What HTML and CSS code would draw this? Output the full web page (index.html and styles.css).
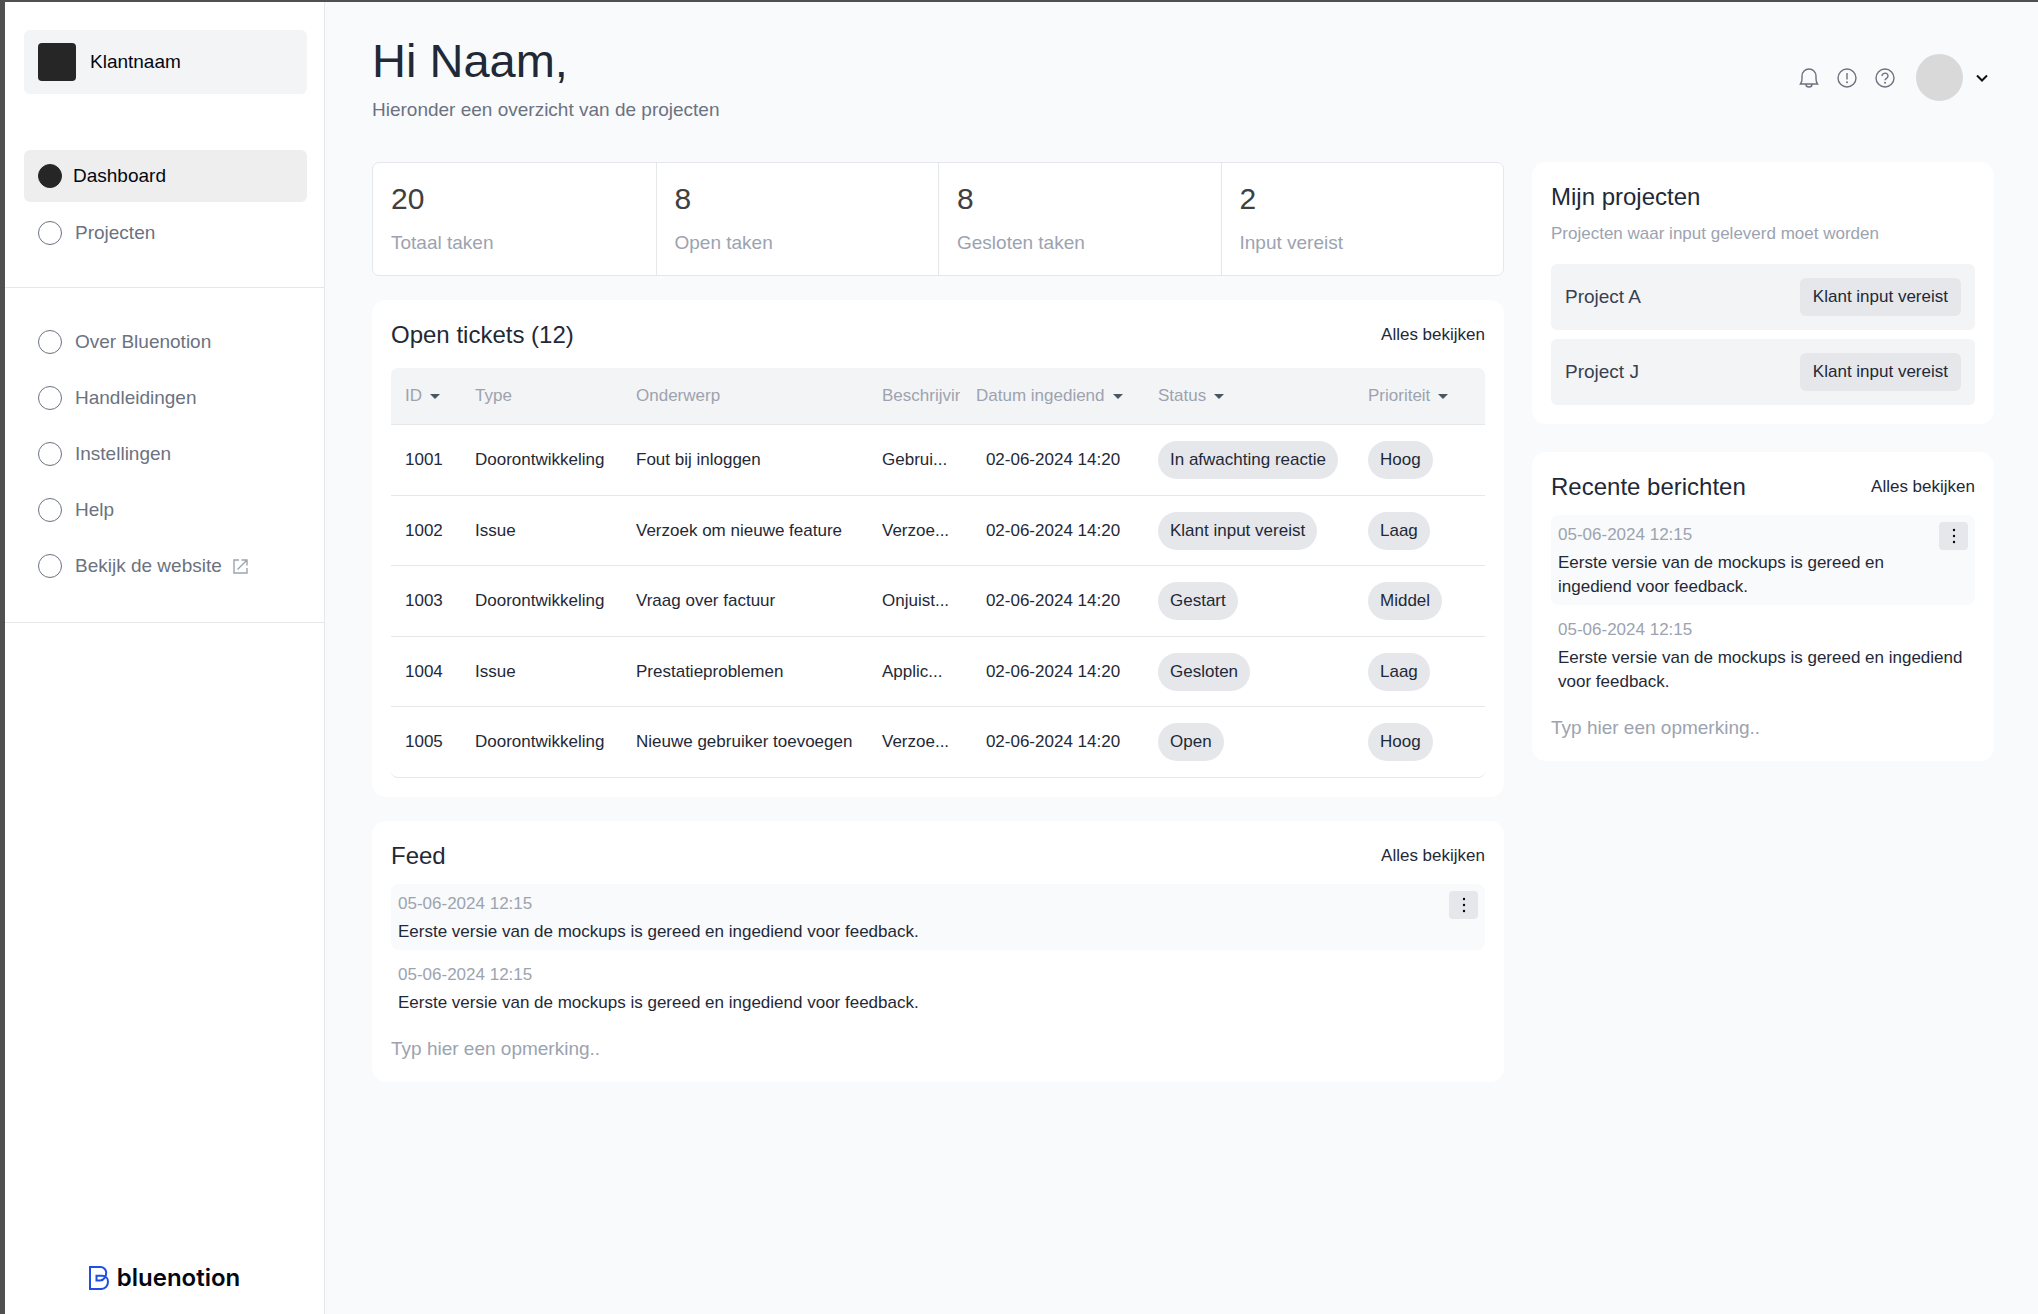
FILE: index.html
```html
<!DOCTYPE html>
<html lang="nl">
<head>
  <meta charset="utf-8">
  <meta name="viewport" content="width=device-width, initial-scale=1">
  <title>Dashboard</title>
  <link rel="stylesheet" href="styles.css">
</head>
<body>
  <div class="app">
    <aside class="sidebar">
      <a class="client" href="#"><span class="client-logo"></span>Klantnaam</a>
      <nav class="menu">
        <a class="menu-item active" href="#"><span class="dot"></span>Dashboard</a>
        <a class="menu-item" href="#"><span class="dot"></span>Projecten</a>
      </nav>
      <nav class="menu menu-secondary">
        <a class="menu-item" href="#"><span class="dot"></span>Over Bluenotion</a>
        <a class="menu-item" href="#"><span class="dot"></span>Handleidingen</a>
        <a class="menu-item" href="#"><span class="dot"></span>Instellingen</a>
        <a class="menu-item" href="#"><span class="dot"></span>Help</a>
        <a class="menu-item" href="#"><span class="dot"></span>Bekijk de website
          <svg class="external" viewBox="0 0 15 15" width="15" height="15"><path d="M6 1H1v13h13V9M8.500 1H14v5.500M14 1L4.500 10.500"/></svg>
        </a>
      </nav>
      <a class="brand" href="#">
        <svg class="brand-mark" viewBox="0 0 20 24" width="20" height="24"><path d="M1 1h10.500a5.700 5.700 0 0 1 5.700 5.700c0 3.500-2.200 7.800-6 7.800H7.500V9.700h5.700c3.400 0 5.800 2.500 5.800 6.100 0 4-2.800 7.200-6.500 7.200H1z"/></svg>
        bluenotion
      </a>
    </aside>

    <main class="main">
      <header class="header">
        <div>
          <h1>Hi Naam,</h1>
          <p class="intro">Hieronder een overzicht van de projecten</p>
        </div>
        <div class="actions">
          <button class="icon-button" type="button" aria-label="Meldingen">
            <svg viewBox="0 0 20 20" width="20" height="20"><path d="M1.500 16h17c-1.300-1.700-1.500-3.500-1.500-5.500V8A7 7 0 0 0 3 8v2.500c0 2-.2 3.800-1.500 5.500zM7 16.500a3 2.500 0 0 0 6 0"/></svg>
          </button>
          <button class="icon-button" type="button" aria-label="Waarschuwingen">
            <svg viewBox="0 0 20 20" width="20" height="20"><circle cx="10" cy="10" r="9"/><path d="M10 5v6.500"/><circle class="point" cx="10" cy="14.200" r="1"/></svg>
          </button>
          <button class="icon-button" type="button" aria-label="Hulp">
            <svg viewBox="0 0 20 20" width="20" height="20"><circle cx="10" cy="10" r="9"/><path d="M7 8a3 2.800 0 1 1 4.600 2.300c-.9.600-1.600 1-1.600 2"/><circle class="point" cx="10" cy="14.800" r="1"/></svg>
          </button>
          <button class="account" type="button" aria-label="Account">
            <span class="avatar"></span>
            <svg class="chevron" viewBox="0 0 12 8" width="12" height="8"><path d="M1 1.500l5 5 5-5"/></svg>
          </button>
        </div>
      </header>

      <div class="columns">
        <div class="column">
          <dl class="stats">
            <div class="stat"><dt>Totaal taken</dt><dd>20</dd></div>
            <div class="stat"><dt>Open taken</dt><dd>8</dd></div>
            <div class="stat"><dt>Gesloten taken</dt><dd>8</dd></div>
            <div class="stat"><dt>Input vereist</dt><dd>2</dd></div>
          </dl>

          <section class="card tickets">
            <div class="card-head"><h2>Open tickets (12)</h2><a class="more" href="#">Alles bekijken</a></div>
            <table>
              <colgroup>
                <col class="c-id"><col class="c-type"><col class="c-subject"><col class="c-description"><col class="c-date"><col class="c-status"><col class="c-priority">
              </colgroup>
              <thead>
                <tr>
                  <th><button class="sort" type="button">ID<span class="caret"></span></button></th>
                  <th>Type</th>
                  <th>Onderwerp</th>
                  <th><span class="clip">Beschrijving</span></th>
                  <th><button class="sort" type="button">Datum ingediend<span class="caret"></span></button></th>
                  <th><button class="sort" type="button">Status<span class="caret"></span></button></th>
                  <th><button class="sort" type="button">Prioriteit<span class="caret"></span></button></th>
                </tr>
              </thead>
              <tbody>
                <tr><td>1001</td><td>Doorontwikkeling</td><td>Fout bij inloggen</td><td>Gebrui...</td><td class="date">02-06-2024 14:20</td><td><span class="pill">In afwachting reactie</span></td><td><span class="pill">Hoog</span></td></tr>
                <tr><td>1002</td><td>Issue</td><td>Verzoek om nieuwe feature</td><td>Verzoe...</td><td class="date">02-06-2024 14:20</td><td><span class="pill">Klant input vereist</span></td><td><span class="pill">Laag</span></td></tr>
                <tr><td>1003</td><td>Doorontwikkeling</td><td>Vraag over factuur</td><td>Onjuist...</td><td class="date">02-06-2024 14:20</td><td><span class="pill">Gestart</span></td><td><span class="pill">Middel</span></td></tr>
                <tr><td>1004</td><td>Issue</td><td>Prestatieproblemen</td><td>Applic...</td><td class="date">02-06-2024 14:20</td><td><span class="pill">Gesloten</span></td><td><span class="pill">Laag</span></td></tr>
                <tr><td>1005</td><td>Doorontwikkeling</td><td>Nieuwe gebruiker toevoegen</td><td>Verzoe...</td><td class="date">02-06-2024 14:20</td><td><span class="pill">Open</span></td><td><span class="pill">Hoog</span></td></tr>
              </tbody>
            </table>
          </section>

          <section class="card">
            <div class="card-head"><h2>Feed</h2><a class="more" href="#">Alles bekijken</a></div>
            <div class="messages">
              <article class="message highlighted">
                <div class="message-body"><time>05-06-2024 12:15</time><p>Eerste versie van de mockups is gereed en ingediend voor feedback.</p></div>
                <button class="kebab" type="button" aria-label="Opties"><svg viewBox="0 0 4 16" width="4" height="16"><circle cx="2" cy="2" r="1.200"/><circle cx="2" cy="8" r="1.200"/><circle cx="2" cy="14" r="1.200"/></svg></button>
              </article>
              <article class="message">
                <div class="message-body"><time>05-06-2024 12:15</time><p>Eerste versie van de mockups is gereed en ingediend voor feedback.</p></div>
              </article>
            </div>
            <input class="comment" type="text" aria-label="Opmerking bij feed" placeholder="Typ hier een opmerking..">
          </section>
        </div>

        <div class="column column-side">
          <section class="card">
            <h2>Mijn projecten</h2>
            <p class="card-sub">Projecten waar input geleverd moet worden</p>
            <ul class="projects">
              <li class="project">Project A<span class="badge">Klant input vereist</span></li>
              <li class="project">Project J<span class="badge">Klant input vereist</span></li>
            </ul>
          </section>

          <section class="card">
            <div class="card-head"><h2>Recente berichten</h2><a class="more" href="#">Alles bekijken</a></div>
            <div class="messages">
              <article class="message highlighted">
                <div class="message-body"><time>05-06-2024 12:15</time><p>Eerste versie van de mockups is gereed en ingediend voor feedback.</p></div>
                <button class="kebab" type="button" aria-label="Opties"><svg viewBox="0 0 4 16" width="4" height="16"><circle cx="2" cy="2" r="1.200"/><circle cx="2" cy="8" r="1.200"/><circle cx="2" cy="14" r="1.200"/></svg></button>
              </article>
              <article class="message">
                <div class="message-body"><time>05-06-2024 12:15</time><p>Eerste versie van de mockups is gereed en ingediend voor feedback.</p></div>
              </article>
            </div>
            <input class="comment" type="text" aria-label="Opmerking bij berichten" placeholder="Typ hier een opmerking..">
          </section>
        </div>
      </div>
    </main>
  </div>
</body>
</html>
```

FILE: styles.css
```css
* {
  box-sizing: border-box;
}

body {
  margin: 0;
  background: #f9fafc;
  color: #1f2937;
  font-family: "Liberation Sans", Arial, Helvetica, sans-serif;
  font-size: 17px;
  line-height: 24px;
}

h1, h2, p, dl, dd, ul {
  margin: 0;
  padding: 0;
}

a {
  color: inherit;
  text-decoration: none;
}

button {
  padding: 0;
  border: 0;
  background: none;
  color: inherit;
  font: inherit;
  cursor: pointer;
}

svg {
  display: block;
  flex: none;
  fill: none;
  stroke: currentColor;
}

.app {
  display: grid;
  grid-template-columns: 320px minmax(0, 1fr);
  min-height: 100vh;
  border-top: 2px solid #505050;
  border-left: 5px solid #505050;
}

/* Sidebar */

.sidebar {
  display: flex;
  flex-direction: column;
  padding: 28px 0 24px;
  border-right: 1px solid #e5e7eb;
  background: #fff;
  font-size: 19px;
}

.client {
  display: flex;
  align-items: center;
  gap: 14px;
  height: 64px;
  margin: 0 17px 56px 19px;
  padding: 0 14px;
  border-radius: 6px;
  background: #f3f4f6;
  color: #030712;
}

.client-logo {
  width: 38px;
  height: 38px;
  border-radius: 4px;
  background: #262626;
}

.menu {
  display: flex;
  flex-direction: column;
  gap: 5px;
  padding: 0 17px 28px 19px;
  border-bottom: 1px solid #e5e7eb;
}

.menu-secondary {
  gap: 4px;
  padding-top: 28px;
  padding-bottom: 30px;
}

.menu-item {
  display: flex;
  align-items: center;
  gap: 13px;
  height: 52px;
  padding: 0 14px;
  border-radius: 6px;
  color: #6b7280;
}

.menu-item.active {
  gap: 11px;
  background: #eee;
  color: #030712;
}

.dot {
  width: 24px;
  height: 24px;
  border: 1px solid #6b7280;
  border-radius: 50%;
}

.active .dot {
  border-color: #262626;
  background: #262626;
}

.external {
  margin-left: -2px;
  color: #9ca3af;
  stroke-width: 1.4;
}

.brand {
  display: flex;
  align-items: center;
  justify-content: center;
  gap: 8px;
  margin-top: auto;
  color: #030712;
  font: 600 24px/24px Inter, sans-serif;
}

.brand-mark {
  color: #1d4ee8;
  stroke-width: 2;
}

/* Page header */

.main {
  padding: 31px 44px 40px 47px;
}

.header {
  display: flex;
  align-items: center;
  justify-content: space-between;
  margin-bottom: 40px;
}

h1 {
  font-size: 47px;
  font-weight: 400;
  line-height: 56px;
}

.intro {
  margin-top: 9px;
  color: #6b7280;
  font-size: 19px;
}

.actions {
  display: flex;
  align-items: center;
  gap: 18px;
  padding-right: 6px;
  color: #6b7280;
}

.icon-button {
  stroke-width: 1.4;
}

.account {
  display: flex;
  align-items: center;
  gap: 13px;
  margin-left: 3px;
}

.avatar {
  width: 47px;
  height: 47px;
  border-radius: 50%;
  background: #d9d9d9;
}

.chevron {
  color: #111;
  stroke-width: 2;
}

.point {
  fill: currentColor;
  stroke: none;
}

/* Content columns */

.columns {
  display: grid;
  grid-template-columns: minmax(0, 1132fr) minmax(0, 462fr);
  align-items: start;
  gap: 28px;
}

.column {
  display: flex;
  flex-direction: column;
  gap: 24px;
}

.column-side {
  gap: 28px;
}

.stats {
  display: grid;
  grid-template-columns: repeat(4, minmax(0, 1fr));
  border: 1px solid #e5e7eb;
  border-radius: 7px;
  background: #fff;
}

.stat {
  display: flex;
  flex-direction: column-reverse;
  gap: 13px;
  padding: 17px 18px 20px;
  color: #404040;
}

.stat + .stat {
  border-left: 1px solid #e5e7eb;
}

.stat dt {
  color: #9ca3af;
  font-size: 19px;
}

.stat dd {
  font-size: 30px;
  line-height: 38px;
}

.card {
  padding: 20px 19px 19px;
  border-radius: 14px;
  background: #fff;
}

.card-head {
  display: flex;
  align-items: center;
  justify-content: space-between;
  margin-bottom: 14px;
}

h2 {
  font-size: 24px;
  font-weight: 400;
  line-height: 29px;
}

.card-sub {
  margin: 11px 0 18px;
  color: #9ca3af;
}

/* Tickets */

.tickets .card-head {
  margin-bottom: 19px;
}

table {
  width: 100%;
  table-layout: fixed;
  border-spacing: 0;
}

.c-id { width: 70px; }
.c-type { width: 161px; }
.c-subject { width: 246px; }
.c-description { width: 94px; }
.c-date { width: 182px; }
.c-status { width: 210px; }

th, td {
  padding: 0 0 0 14px;
  border-bottom: 1px solid #e5e7eb;
  text-align: left;
  white-space: nowrap;
}

th {
  height: 57px;
  background: #f3f4f6;
  color: #9ca3af;
  font-weight: 400;
}

th:first-child {
  border-top-left-radius: 7px;
}

th:last-child {
  border-top-right-radius: 7px;
}

td {
  height: 71px;
}

tr:nth-child(even) td {
  height: 70px;
}

tr:last-child td:first-child {
  border-bottom-left-radius: 7px;
}

tr:last-child td:last-child {
  border-bottom-right-radius: 7px;
}

.date {
  padding-right: 14px;
  text-align: center;
}

.clip {
  display: block;
  width: 78px;
  overflow: hidden;
}

.sort {
  display: flex;
  align-items: center;
  gap: 8px;
}

.caret {
  border: 5px solid transparent;
  border-top-color: #4b5563;
  border-bottom: 0;
}

.pill {
  display: inline-block;
  padding: 0 12px;
  border-radius: 19px;
  background: #e5e7eb;
  line-height: 38px;
}

/* Messages */

.messages {
  display: flex;
  flex-direction: column;
  gap: 5px;
}

.message {
  display: flex;
  align-items: flex-start;
  justify-content: space-between;
  gap: 7px;
  padding: 7px 7px 6px;
  border-radius: 8px;
}

.message.highlighted {
  background: #f9fafb;
}

.message-body {
  display: flex;
  flex-direction: column;
  gap: 4px;
  padding-top: 1px;
}

time {
  color: #9ca3af;
}

.kebab {
  display: grid;
  place-items: center;
  flex: none;
  width: 29px;
  height: 28px;
  border-radius: 4px;
  background: #e5e7eb;
  color: #030712;
}

.kebab svg {
  fill: currentColor;
  stroke: none;
}

.comment {
  display: block;
  width: 100%;
  height: 28px;
  margin-top: 14px;
  padding: 0;
  border: 0;
  background: none;
  color: inherit;
  font: inherit;
  font-size: 19px;
}

.comment::placeholder {
  color: #9ca3af;
}

/* Projects */

.projects {
  display: flex;
  flex-direction: column;
  gap: 9px;
  list-style: none;
}

.project {
  display: flex;
  align-items: center;
  justify-content: space-between;
  height: 66px;
  padding: 0 14px;
  border-radius: 6px;
  background: #f3f4f6;
  color: #374151;
  font-size: 19px;
}

.badge {
  padding: 0 13px;
  border-radius: 6px;
  background: #e5e7eb;
  color: #1f2937;
  font-size: 17px;
  line-height: 38px;
}
```
